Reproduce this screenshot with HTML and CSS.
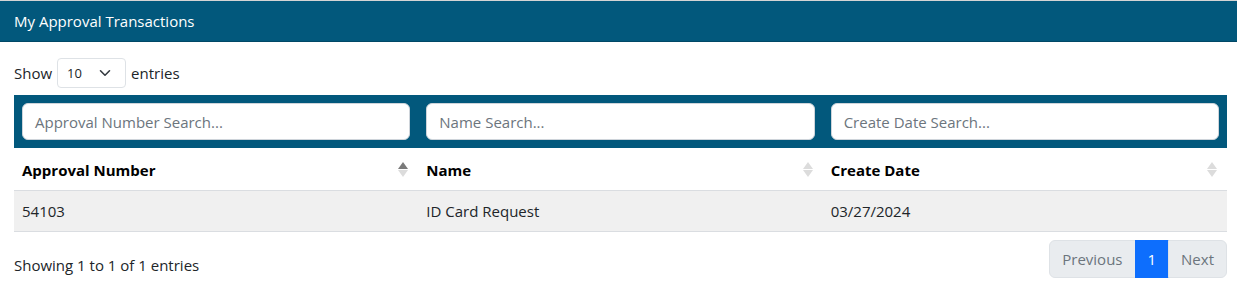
FILE: index.html
```html
<!DOCTYPE html>
<html>
<head>
<meta charset="utf-8">
<link rel="stylesheet" href="styles.css">
</head>
<body>
<div class="card">
  <div class="card-header">My Approval Transactions</div>
  <div class="card-body">
    <div class="length">
      <span>Show</span>
      <div class="select"><span>10</span>
        <svg width="12" height="8" viewBox="0 0 12 8"><path d="M1.5 1.8 L6 6.2 L10.5 1.8" fill="none" stroke="#343a40" stroke-width="1.6" stroke-linecap="round" stroke-linejoin="round"/></svg>
      </div>
      <span>entries</span>
    </div>
    <table class="grid">
      <thead>
        <tr class="search-row">
          <th><div class="input">Approval Number Search...</div></th>
          <th><div class="input">Name Search...</div></th>
          <th><div class="input">Create Date Search...</div></th>
        </tr>
        <tr class="head-row">
          <th><div class="hcell"><span>Approval Number</span><span class="sort sorted"><i class="up"></i><i class="down"></i></span></div></th>
          <th><div class="hcell"><span>Name</span><span class="sort"><i class="up"></i><i class="down"></i></span></div></th>
          <th><div class="hcell"><span>Create Date</span><span class="sort"><i class="up"></i><i class="down"></i></span></div></th>
        </tr>
      </thead>
      <tbody>
        <tr class="odd">
          <td>54103</td>
          <td>ID Card Request</td>
          <td>03/27/2024</td>
        </tr>
      </tbody>
    </table>
    <div class="footer">
      <div class="info">Showing 1 to 1 of 1 entries</div>
      <div class="pager">
        <span class="pg disabled first">Previous</span>
        <span class="pg current">1</span>
        <span class="pg disabled last">Next</span>
      </div>
    </div>
  </div>
</div>
</body>
</html>
```
FILE: styles.css
```css
* { box-sizing: border-box; }
html, body { margin: 0; padding: 0; background: #fff; }
body {
  font-family: "Open Sans", "Noto Sans", sans-serif;
  font-size: 15px;
  color: #212529;
}
.card {
  border-top: 1px solid #d4d4d4;
}
.card-header {
  background: #02587c;
  color: #fff;
  height: 41px;
  border-bottom: 1px solid #014866;
  padding: 0 14px;
  display: flex;
  align-items: center;
  font-size: 15px;
}
.card-body {
  padding: 16px 10px 0 14px;
}
.length {
  display: flex;
  align-items: center;
  gap: 5px;
  height: 30px;
}
.select {
  width: 69px;
  height: 30px;
  border: 1px solid #dee2e6;
  border-radius: 4px;
  display: flex;
  align-items: center;
  justify-content: space-between;
  padding: 0 14px 0 9px;
  font-size: 13px;
}
.grid {
  margin-top: 7px;
  width: 100%;
  border-collapse: collapse;
  table-layout: fixed;
}
.search-row th {
  background: #02587c;
  padding: 8px;
}
.input {
  height: 37px;
  border: 1px solid #ced4da;
  border-radius: 6px;
  background: #fff;
  color: #6c757d;
  font-weight: 400;
  text-align: left;
  display: flex;
  align-items: center;
  padding: 0 12px;
  font-size: 15px;
}
.head-row th {
  padding: 2px 8px 0;
  height: 42px;
  border-bottom: 1px solid #dadde1;
  text-align: left;
  font-weight: 700;
  color: #000;
}
.hcell {
  display: flex;
  justify-content: space-between;
  align-items: center;
}
.sort {
  display: flex;
  flex-direction: column;
  gap: 1px;
  margin-right: 2px;
}
.sort i {
  display: block;
  width: 0;
  height: 0;
  border-left: 5px solid transparent;
  border-right: 5px solid transparent;
}
.sort .up { border-bottom: 7px solid #dcdcdc; }
.sort .down { border-top: 7px solid #dcdcdc; }
.sort.sorted .up { border-bottom-color: #7a7a7a; }
.grid td {
  padding: 0 8px;
  height: 41px;
  border-bottom: 1px solid #dadde1;
}
.odd td { background: #f0f0f0; }
.footer {
  display: flex;
  justify-content: space-between;
  align-items: flex-start;
  margin-top: 8px;
}
.info { padding-top: 15px; }
.pager {
  display: flex;
  height: 38px;
}
.pg {
  display: flex;
  align-items: center;
  padding: 0 12px;
  border: 1px solid #dee2e6;
  margin-left: -1px;
}
.disabled { background: #e9ecef; color: #6c757d; }
.current { background: #0d6efd; color: #fff; border-color: #0d6efd; }
.first { border-radius: 6px 0 0 6px; }
.last { border-radius: 0 6px 6px 0; }
```
